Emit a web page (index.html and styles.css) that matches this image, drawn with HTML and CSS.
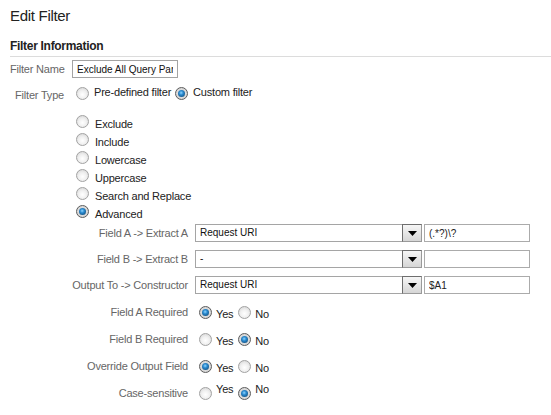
FILE: index.html
```html
<!DOCTYPE html>
<html>
<head>
<meta charset="utf-8">
<link rel="stylesheet" href="styles.css">
</head>
<body>
<div class="page">
  <h1 class="title">Edit Filter</h1>
  <h2 class="section">Filter Information</h2>

  <div class="row-top">
    <span class="lbl lbl-top">Filter Name</span>
    <input class="name-input" type="text" value="Exclude All Query Parameters">
  </div>

  <div class="type-row">
    <span class="lbl lbl-top lbl-type">Filter Type</span>
    <div class="type-opts">
      <span class="radio"></span><span class="opt opt-pre">Pre-defined filter</span>
      <span class="radio on"></span><span class="opt opt-custom">Custom filter</span>
    </div>
  </div>

  <div class="choice-list">
    <div class="choice"><span class="radio"></span><span class="opt">Exclude</span></div>
    <div class="choice"><span class="radio"></span><span class="opt">Include</span></div>
    <div class="choice"><span class="radio"></span><span class="opt">Lowercase</span></div>
    <div class="choice"><span class="radio"></span><span class="opt">Uppercase</span></div>
    <div class="choice"><span class="radio"></span><span class="opt">Search and Replace</span></div>
    <div class="choice"><span class="radio on"></span><span class="opt">Advanced</span></div>
  </div>

  <div class="adv-selects">
    <span class="lbl lbl-adv">Field A -&gt; Extract A</span>
    <div class="ctrl">
      <div class="sel"><span class="sel-text">Request URI</span><span class="sel-btn"><svg width="9" height="5" viewBox="0 0 9 5"><polygon points="0,0 9,0 4.5,5" fill="#000"/></svg></span></div>
      <input class="txt" type="text" value="(.*?)\?">
    </div>

    <span class="lbl lbl-adv">Field B -&gt; Extract B</span>
    <div class="ctrl">
      <div class="sel"><span class="sel-text">-</span><span class="sel-btn"><svg width="9" height="5" viewBox="0 0 9 5"><polygon points="0,0 9,0 4.5,5" fill="#000"/></svg></span></div>
      <input class="txt" type="text" value="">
    </div>

    <span class="lbl lbl-adv">Output To -&gt; Constructor</span>
    <div class="ctrl">
      <div class="sel"><span class="sel-text">Request URI</span><span class="sel-btn"><svg width="9" height="5" viewBox="0 0 9 5"><polygon points="0,0 9,0 4.5,5" fill="#000"/></svg></span></div>
      <input class="txt" type="text" value="$A1">
    </div>
  </div>

  <div class="adv-radios">
    <span class="lbl lbl-adv">Field A Required</span>
    <div class="yn">
      <span class="radio on"></span><span class="yn-text yes">Yes</span>
      <span class="radio r-no"></span><span class="yn-text">No</span>
    </div>

    <span class="lbl lbl-adv">Field B Required</span>
    <div class="yn">
      <span class="radio"></span><span class="yn-text yes">Yes</span>
      <span class="radio on r-no"></span><span class="yn-text">No</span>
    </div>

    <span class="lbl lbl-adv">Override Output Field</span>
    <div class="yn">
      <span class="radio on"></span><span class="yn-text yes">Yes</span>
      <span class="radio r-no"></span><span class="yn-text">No</span>
    </div>

    <span class="lbl lbl-adv">Case-sensitive</span>
    <div class="yn">
      <span class="radio"></span><span class="yn-text yes up">Yes</span>
      <span class="radio on r-no"></span><span class="yn-text up">No</span>
    </div>
  </div>
</div>
</body>
</html>
```

FILE: styles.css
```css
* {
  box-sizing: border-box;
}

body {
  margin: 0;
  background: #fff;
  font-family: "Liberation Sans", Arial, sans-serif;
  font-size: 11px;
  letter-spacing: -0.2px;
  color: #222;
}

.page {
  padding-left: 10px;
}

.title {
  margin: 0;
  padding-top: 6px;
  font-size: 15px;
  font-weight: normal;
  line-height: 20px;
  letter-spacing: -0.3px;
  color: #222;
}

.section {
  margin: 13px 0 0 0;
  font-size: 12px;
  font-weight: bold;
  line-height: 15px;
  letter-spacing: -0.3px;
  padding-bottom: 2px;
  border-bottom: 1px solid #dcdcdc;
  color: #222;
}

.lbl {
  color: #666;
  line-height: 13px;
  text-align: right;
  flex: none;
  white-space: nowrap;
}

.lbl-top {
  width: 54px;
}

.row-top {
  display: flex;
  align-items: center;
  height: 18px;
  margin-top: 3px;
}

.name-input {
  margin: 0 0 0 8px;
  width: 106px;
  height: 18px;
  border: 1px solid #a3a3a3;
  padding: 0 4px;
  font-family: inherit;
  font-size: 10px;
  letter-spacing: 0;
  color: #111;
  outline: none;
}

.type-row {
  display: flex;
  align-items: flex-start;
  height: 16px;
  margin-top: 8px;
}

.lbl-type {
  padding-top: 3px;
}

.type-opts {
  display: flex;
  align-items: flex-start;
  margin-left: 12px;
}

.type-opts .radio {
  margin-top: 1px;
}

.opt {
  line-height: 13px;
  color: #222;
  white-space: nowrap;
}

.opt-pre {
  margin-left: 5px;
  margin-right: 4px;
}

.opt-custom {
  margin-left: 5px;
}

.choice-list {
  margin-top: 13px;
  margin-left: 66px;
}

.choice {
  display: flex;
  align-items: flex-start;
  height: 18px;
}

.choice .opt {
  margin-left: 6px;
  padding-top: 3px;
}

.radio {
  flex: none;
  width: 13px;
  height: 13px;
  border-radius: 50%;
  border: 1px solid #a2a2a2;
  background: radial-gradient(circle at 50% 60%, #ffffff 0%, #f0f0f0 45%, #cfcfcf 100%);
  display: flex;
  align-items: center;
  justify-content: center;
}

.radio.on {
  border-color: #5c5c5c;
  background: radial-gradient(circle at 50% 50%, #e8e8e8 0%, #cfcfcf 100%);
}

.radio.on::after {
  content: "";
  width: 7px;
  height: 7px;
  border-radius: 50%;
  background: radial-gradient(circle at 45% 40%, #8fd6ff 0%, #2a8ad0 35%, #0d3d63 100%);
}

.adv-selects {
  display: grid;
  grid-template-columns: 178px auto;
  grid-auto-rows: 18px;
  column-gap: 7px;
  row-gap: 8px;
  align-items: center;
  margin-top: 1px;
}

.ctrl {
  display: flex;
  align-items: center;
  height: 18px;
}

.sel {
  display: flex;
  width: 227px;
  height: 18px;
}

.sel-text {
  flex: 1;
  border: 1px solid #a5a5a5;
  border-right: none;
  padding-left: 4px;
  line-height: 16px;
  font-size: 10px;
  letter-spacing: 0;
  color: #111;
  background: #fff;
}

.sel-btn {
  flex: none;
  width: 20px;
  height: 18px;
  border: 1px solid #6e6e6e;
  border-right-color: #9a9a9a;
  border-bottom-color: #9a9a9a;
  background: linear-gradient(#f6f6f6, #d6d6d6);
  display: flex;
  align-items: center;
  justify-content: center;
}

.sel-btn svg {
  display: block;
}

.txt {
  margin: 0 0 0 2px;
  width: 106px;
  height: 18px;
  border: 1px solid #ababab;
  padding: 0 4px;
  font-family: inherit;
  font-size: 10px;
  letter-spacing: 0;
  color: #222;
  outline: none;
}

.adv-radios {
  display: grid;
  grid-template-columns: 178px auto;
  grid-auto-rows: 13px;
  column-gap: 7px;
  row-gap: 14px;
  align-items: start;
  margin-top: 12px;
}

.yn {
  display: flex;
  align-items: flex-start;
  height: 13px;
}

.yn .radio {
  margin-left: 4px;
}

.yn .r-no {
  margin-left: 5px;
}

.yn-text {
  margin-left: 4px;
  padding-top: 2px;
  line-height: 13px;
  color: #222;
}

.yn-text.up {
  padding-top: 0;
  margin-top: -4px;
}
```
